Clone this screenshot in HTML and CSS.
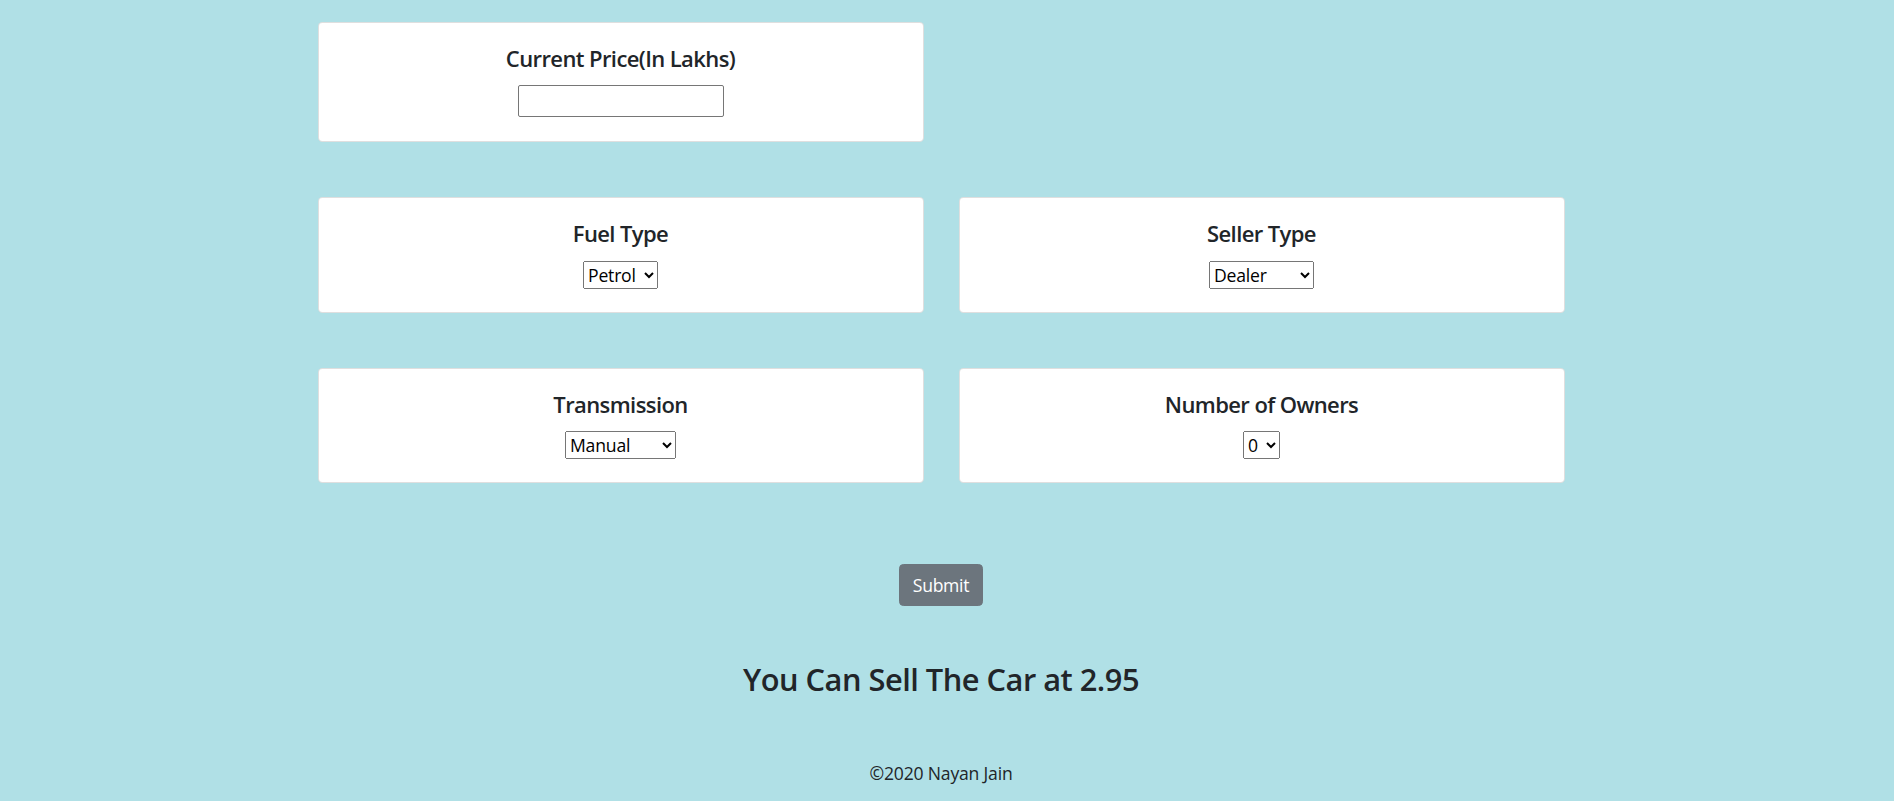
FILE: index.html
```html
<!DOCTYPE html>
<html>
  <head>
    <title>Car Price Prediction</title>
    <link rel="stylesheet" href="styles.css">
  </head>
  <body>
    <div class="page">
      <form class="predict-form" action="#" method="post">
        <div class="form-row">
          <div class="card card-price">
            <h5 class="card-title">Current Price(In Lakhs)</h5>
            <input type="text" id="Present_Price" name="Present_Price" class="price-input" />
          </div>
        </div>

        <div class="form-row">
          <div class="card">
            <h5 class="card-title">Fuel Type</h5>
            <select id="Fuel_Type" name="Fuel_Type" class="select select-fuel">
              <option value="Petrol">Petrol</option>
              <option value="Diesel">Diesel</option>
              <option value="CNG">CNG</option>
            </select>
          </div>
          <div class="card">
            <h5 class="card-title">Seller Type</h5>
            <select id="Seller_Type" name="Seller_Type" class="select select-seller">
              <option value="Dealer">Dealer</option>
              <option value="Individual">Individual</option>
            </select>
          </div>
        </div>

        <div class="form-row">
          <div class="card">
            <h5 class="card-title">Transmission</h5>
            <select id="Transmission" name="Transmission" class="select select-trans">
              <option value="Manual">Manual</option>
              <option value="Automatic">Automatic</option>
            </select>
          </div>
          <div class="card">
            <h5 class="card-title">Number of Owners</h5>
            <select id="Owner" name="Owner" class="select select-owner">
              <option value="0">0</option>
              <option value="1">1</option>
              <option value="3">3</option>
            </select>
          </div>
        </div>

        <div class="actions">
          <button type="submit" class="btn-submit">Submit</button>
        </div>
      </form>

      <h3 class="result">You Can Sell The Car at 2.95</h3>

      <footer class="footer">&copy;2020 Nayan Jain</footer>
    </div>
  </body>
</html>
```

FILE: styles.css
```css
html,
body {
  margin: 0;
  background: #b0e0e6;
}

body {
  font-family: "Open Sans", "Noto Sans", sans-serif;
  font-size: 17.6px;
  line-height: 1.5;
  letter-spacing: -0.2px;
  color: #212529;
}

/* page area minus the scrollbar gutter */
.page {
  width: 1882px;
  padding-top: 22px;
  text-align: center;
}

.form-row {
  display: grid;
  grid-template-columns: 606px 606px;
  column-gap: 35px;
  justify-content: center;
  margin-bottom: 55px;
}

.card {
  background: #fff;
  border: 1px solid rgba(0, 0, 0, 0.125);
  border-radius: 4.4px;
  padding: 21px 0 23px;
  text-align: center;
}

.card-price {
  padding-bottom: 24px;
}

.card-title {
  margin: 0 0 14px;
  padding-top: 1px;
  font-size: 22px;
  font-weight: 600;
  line-height: 1.2;
  letter-spacing: -0.6px;
}

.price-input {
  display: block;
  margin: 0 auto;
  width: 206px;
  height: 32px;
  box-sizing: border-box;
  border: 1px solid #767676;
  border-radius: 2px;
  font: inherit;
}

.select {
  display: block;
  margin: 0 auto;
  height: 28px;
  font-family: inherit;
  font-size: 17.6px;
  letter-spacing: -0.2px;
}

.select-fuel {
  width: 75px;
}

.select-seller {
  width: 105px;
}

.select-trans {
  width: 111px;
}

.select-owner {
  width: 37px;
}

.actions {
  padding-top: 26px;
}

.btn-submit {
  padding: 6.6px 13.2px;
  font-family: inherit;
  font-size: 17.6px;
  line-height: 26.4px;
  letter-spacing: -0.3px;
  color: #fff;
  background: #6c757d;
  border: 1px solid #6c757d;
  border-radius: 4.4px;
}

.result {
  margin: 55px 0 0;
  font-size: 30.8px;
  font-weight: 600;
  line-height: 1.2;
  letter-spacing: -0.5px;
}

.footer {
  margin-top: 62px;
}
```
